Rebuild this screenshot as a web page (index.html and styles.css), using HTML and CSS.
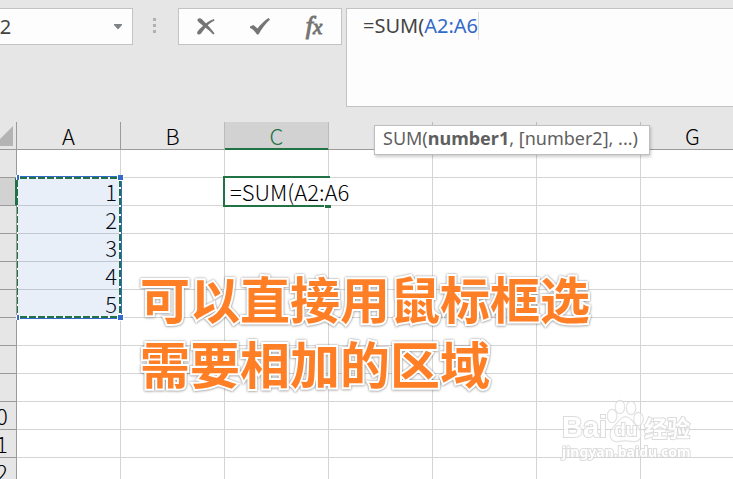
FILE: index.html
```html
<!DOCTYPE html>
<html lang="zh-CN">
<head>
    <meta charset="UTF-8">
    <meta name="viewport" content="width=device-width, initial-scale=1.0">
    <title>SUM</title>
    <link rel="stylesheet" href="styles.css">
</head>
<body>

<header class="formula-bar">
    <div class="name-box">
        <input type="text" class="name-input" value="A2" aria-label="Name Box">
        <button type="button" class="name-arrow" aria-label="Open list">
            <svg width="8" height="5" viewBox="0 0 8 5"><path d="M0 0h8v1L4.500 5h-1L0 1z" fill="#7f8287"/></svg>
        </button>
    </div>
    <div class="grip"><i></i><i></i><i></i></div>
    <div class="actions">
        <button type="button" aria-label="Cancel">
            <svg width="18" height="17" viewBox="0 0 18 17" fill="#757575">
                <path d="M.8 1C2.200-.4 4 .2 5.200 1.600L10.400 7C13.200 9.800 15.400 12.500 17.600 15.500L16.200 16.600C13.600 13.600 10.800 11.200 7.600 9L1.800 4.200C.4 3 0 2 .8 1Z"/>
                <path d="M17 1L17.500 2.400C13.200 4.400 9.900 7.200 7.200 11.200L3.800 15.700C2.400 17 .2 16.600 .1 15C.3 13 2.300 11.100 4.300 9.400C8 5.700 11.800 2.800 17 1Z"/>
            </svg>
        </button>
        <button type="button" aria-label="Enter">
            <svg width="20" height="17" viewBox="0 0 20 17"><path d="M0 8.500L3.500 7L7.500 10.500C10.500 6.500 14 3 18.500 0L20 1.500C16 5 12 10.500 8.500 16.500H7C5 13.500 3 11 0 10Z" fill="#757575"/></svg>
        </button>
        <button type="button" class="fx" aria-label="Insert Function">f<span>x</span></button>
    </div>
    <div class="formula" role="textbox" aria-label="Formula" contenteditable="true" spellcheck="false">=SUM(<span class="ref">A2:A6</span></div>
</header>

<main class="sheet">
    <table class="grid">
        <colgroup>
            <col class="col-num">
            <col><col><col><col><col><col><col>
        </colgroup>
        <thead>
            <tr>
                <th class="corner"><svg width="20" height="20" viewBox="0 0 20 20"><path d="M20 0v20H0z" fill="#b4b4b4"/></svg></th>
                <th>A</th>
                <th>B</th>
                <th class="current">C</th>
                <th></th>
                <th></th>
                <th></th>
                <th>G</th>
            </tr>
        </thead>
        <tbody>
            <tr><th></th><td></td><td></td><td></td><td></td><td></td><td></td><td></td></tr>
            <tr>
                <th class="current"></th>
                <td class="picked">
                    1
                    <!-- moving border around A2:A6 -->
                    <svg class="marquee" width="108" height="146" viewBox="0 0 108 146">
                        <rect x="2" y="3" width="103" height="139" fill="#3369c8" fill-opacity=".11"/>
                        <path d="M1 1.500H105.500V143.500H1" fill="none" stroke="#3369c8"/>
                        <path d="M2 3H104V142H2" fill="none" stroke="#fff" stroke-width="2"/>
                        <path d="M1.500 2V143" stroke="#fff" stroke-width="1"/>
                        <path d="M4 3H103M4 142H103" stroke="#217346" stroke-width="2" stroke-dasharray="7 2"/>
                        <path d="M104 5V141" stroke="#217346" stroke-width="2" stroke-dasharray="7 2"/>
                        <path d="M1.500 5V141" stroke="#217346" stroke-width="1" stroke-dasharray="7 2"/>
                        <path d="M101 0h7v6h-7zM101 139h7v7h-7zM0 0h4v5H0zM0 140h4v5H0z" fill="#fff"/>
                        <path d="M102 0h5v5h-5zM102 140h5v5h-5zM1 0h2v5H1zM1 140h2v5H1z" fill="#3369c8"/>
                    </svg>
                </td>
                <td></td>
                <td class="editing"><span class="edit-text">=SUM(A2:A6</span></td>
                <td></td><td></td><td></td><td></td>
            </tr>
            <tr><th></th><td>2</td><td></td><td></td><td></td><td></td><td></td><td></td></tr>
            <tr><th></th><td>3</td><td></td><td></td><td></td><td></td><td></td><td></td></tr>
            <tr><th></th><td>4</td><td></td><td></td><td></td><td></td><td></td><td></td></tr>
            <tr><th></th><td>5</td><td></td><td></td><td></td><td></td><td></td><td></td></tr>
            <tr><th></th><td></td><td></td><td></td><td></td><td></td><td></td><td></td></tr>
            <tr><th></th><td></td><td></td><td></td><td></td><td></td><td></td><td></td></tr>
            <tr><th></th><td></td><td></td><td></td><td></td><td></td><td></td><td></td></tr>
            <tr><th>10</th><td></td><td></td><td></td><td></td><td></td><td></td><td></td></tr>
            <tr><th>11</th><td></td><td></td><td></td><td></td><td></td><td></td><td></td></tr>
            <tr><th>12</th><td></td><td></td><td></td><td></td><td></td><td></td><td></td></tr>
        </tbody>
    </table>

    <div class="hint" role="tooltip">SUM(<b>number1</b>, [number2], ...)</div>

    <p class="caption">可以直接用鼠标框选<br>需要相加的区域</p>

    <div class="watermark">
        <div class="wm-top">
            <span>Bai</span>
            <span class="paw">
                <svg width="37" height="44" viewBox="0 0 40 44" preserveAspectRatio="none" fill="#fff" fill-opacity=".6" stroke="#d4d4d4" stroke-width="1.500">
                    <ellipse cx="5.500" cy="17" rx="5" ry="6.500"/>
                    <ellipse cx="14" cy="8" rx="5" ry="6.500"/>
                    <ellipse cx="26" cy="9" rx="5" ry="6.500"/>
                    <ellipse cx="34" cy="20" rx="5" ry="6.500"/>
                    <path d="M20 18C14 18 12 24 7 28C2 32 2 42 10 42.500C14 43 16 41.500 20 41.500S27 43 31 42.500C38 41.500 38 32 33 28C28 24 26 18 20 18Z"/>
                </svg>
                <span class="du">du</span>
            </span>
            <span class="wm-cn">经验</span>
        </div>
        <div class="wm-url">jingyan.baidu.com</div>
    </div>
</main>

</body>
</html>
```
FILE: styles.css
```css
* {
    box-sizing: border-box;
}

body {
    margin: 0;
    background-color: #e6e6e6;
    font-family: "Noto Sans", "Open Sans", sans-serif;
    overflow: hidden;
}

button {
    padding: 0;
    border: 0;
    background: none;
    cursor: pointer;
}

svg {
    display: block;
}

/* formula bar */
.formula-bar {
    display: flex;
    align-items: flex-start;
    margin-left: -20px;
    padding: 8px 0 15px;
}

.name-box {
    display: flex;
    align-items: center;
    width: 153px;
    height: 37px;
    padding: 0 10px 0 6px;
    border: 1px solid #c3c3c3;
    background-color: #fdfdfd;
}

.name-input {
    flex: 1;
    min-width: 0;
    padding: 0;
    border: 0;
    outline: 0;
    background: none;
    font: 20px "Noto Sans", "Open Sans", sans-serif;
    color: #444;
}

.grip {
    display: flex;
    flex-direction: column;
    align-items: center;
    gap: 3px;
    width: 45px;
    padding: 10px 2px 0 0;
}

.grip i {
    width: 3px;
    height: 3px;
    background-color: #b1b1b1;
}

.actions {
    display: flex;
    align-items: center;
    width: 164px;
    height: 37px;
    border: 1px solid #c3c3c3;
    background-color: #fdfdfd;
}

.actions button {
    display: flex;
    flex: 1;
    justify-content: center;
}

.actions .fx {
    align-items: baseline;
    font: italic 26px/30px "Liberation Serif", serif;
    color: #757575;
    -webkit-text-stroke: 1px #757575;
}

.fx span {
    font-size: 21px;
}

.formula {
    flex: 1;
    height: 99px;
    margin-left: 4px;
    padding: 3px 16px;
    border: 1px solid #c3c3c3;
    border-right: 0;
    background-color: #fdfdfd;
    font-size: 20px;
    line-height: 28px;
    color: #444;
    outline: 0;
}

.ref {
    display: inline-block;
    border-right: 1px solid #ddd;
    color: #3369c8;
}

/* sheet */
.sheet {
    position: relative;
}

.grid {
    width: 769px;
    margin-left: -24px;
    table-layout: fixed;
    border-collapse: separate;
    border-spacing: 0;
    background-color: #fff;
    font-family: "Noto Sans CJK SC", sans-serif;
    font-size: 22px;
    font-weight: 300;
    line-height: 27px;
    color: #000;
}

.col-num {
    width: 41px;
}

.grid th,
.grid td {
    height: 28px;
    padding: 0;
    border-right: 1px solid #d4d4d4;
    border-bottom: 1px solid #d4d4d4;
}

.grid th {
    background-color: #e6e6e6;
    border-color: #9b9b9b;
    font-weight: 300;
}

.grid thead th:nth-child(n+3) {
    border-right-color: #bbb;
}

.grid td {
    padding-right: 3px;
    text-align: right;
}

.grid thead .corner {
    padding: 4px 3px 3px 0;
}

.corner svg {
    margin-left: auto;
}

.grid thead .current {
    border-bottom-color: #217346;
    background-color: #d2d2d2;
    box-shadow: inset 0 -1px #217346;
    color: #217346;
}

.grid tbody .current {
    border-right: 2px solid #217346;
    background-color: #d2d2d2;
}

.picked {
    position: relative;
}

.marquee {
    position: absolute;
    top: -3px;
    left: -1px;
}

.editing {
    position: relative;
}

.edit-text {
    position: absolute;
    top: -2px;
    left: -2px;
    padding-left: 5px;
    border-left: 2px solid #217346;
    background: linear-gradient(#217346, #217346) 0 0 / 105px 2px no-repeat,
                linear-gradient(#217346, #217346) 0 100% / 99px 2px no-repeat,
                linear-gradient(#fff, #fff) 0 2px / 100% 27px no-repeat;
    line-height: 31px;
}

.edit-text::after {
    content: "";
    position: absolute;
    left: 100px;
    bottom: -1px;
    width: 6px;
    height: 3px;
    background-color: #217346;
}

/* function hint */
.hint {
    position: absolute;
    top: 3px;
    left: 374px;
    padding: 0 11px 4px 8px;
    border: 1px solid #bebebe;
    background-color: #fff;
    box-shadow: 1px 2px 3px rgba(0, 0, 0, .2);
    font-size: 18px;
    line-height: 24px;
    color: #5f5f5f;
    white-space: nowrap;
}

/* caption over the cells */
.caption {
    position: absolute;
    top: 143px;
    left: 140px;
    margin: 0;
    font: bold 50px/65px "Noto Sans CJK SC", sans-serif;
    color: #ff7f27;
    white-space: nowrap;
    -webkit-text-stroke: 4px #fff;
    paint-order: stroke fill;
    filter: drop-shadow(0 0 1px rgba(0, 0, 0, .4)) drop-shadow(0 1px 1px rgba(0, 0, 0, .15));
}

/* watermark */
.watermark {
    position: absolute;
    top: 277px;
    left: 562px;
    font-weight: bold;
    color: #fff;
    -webkit-text-stroke: 2px #d4d4d4;
    paint-order: stroke fill;
    opacity: .8;
}

.wm-top {
    display: flex;
    align-items: flex-end;
    font: bold 29px/32px "Liberation Sans", sans-serif;
}

.paw {
    position: relative;
}

.du {
    position: absolute;
    top: 19px;
    left: 7px;
    font-size: 19px;
    line-height: 24px;
}

.wm-cn {
    font: bold 23px/32px "Noto Sans CJK SC", sans-serif;
}

.wm-url {
    font: bold 14px/18px "Noto Sans", sans-serif;
}
```
